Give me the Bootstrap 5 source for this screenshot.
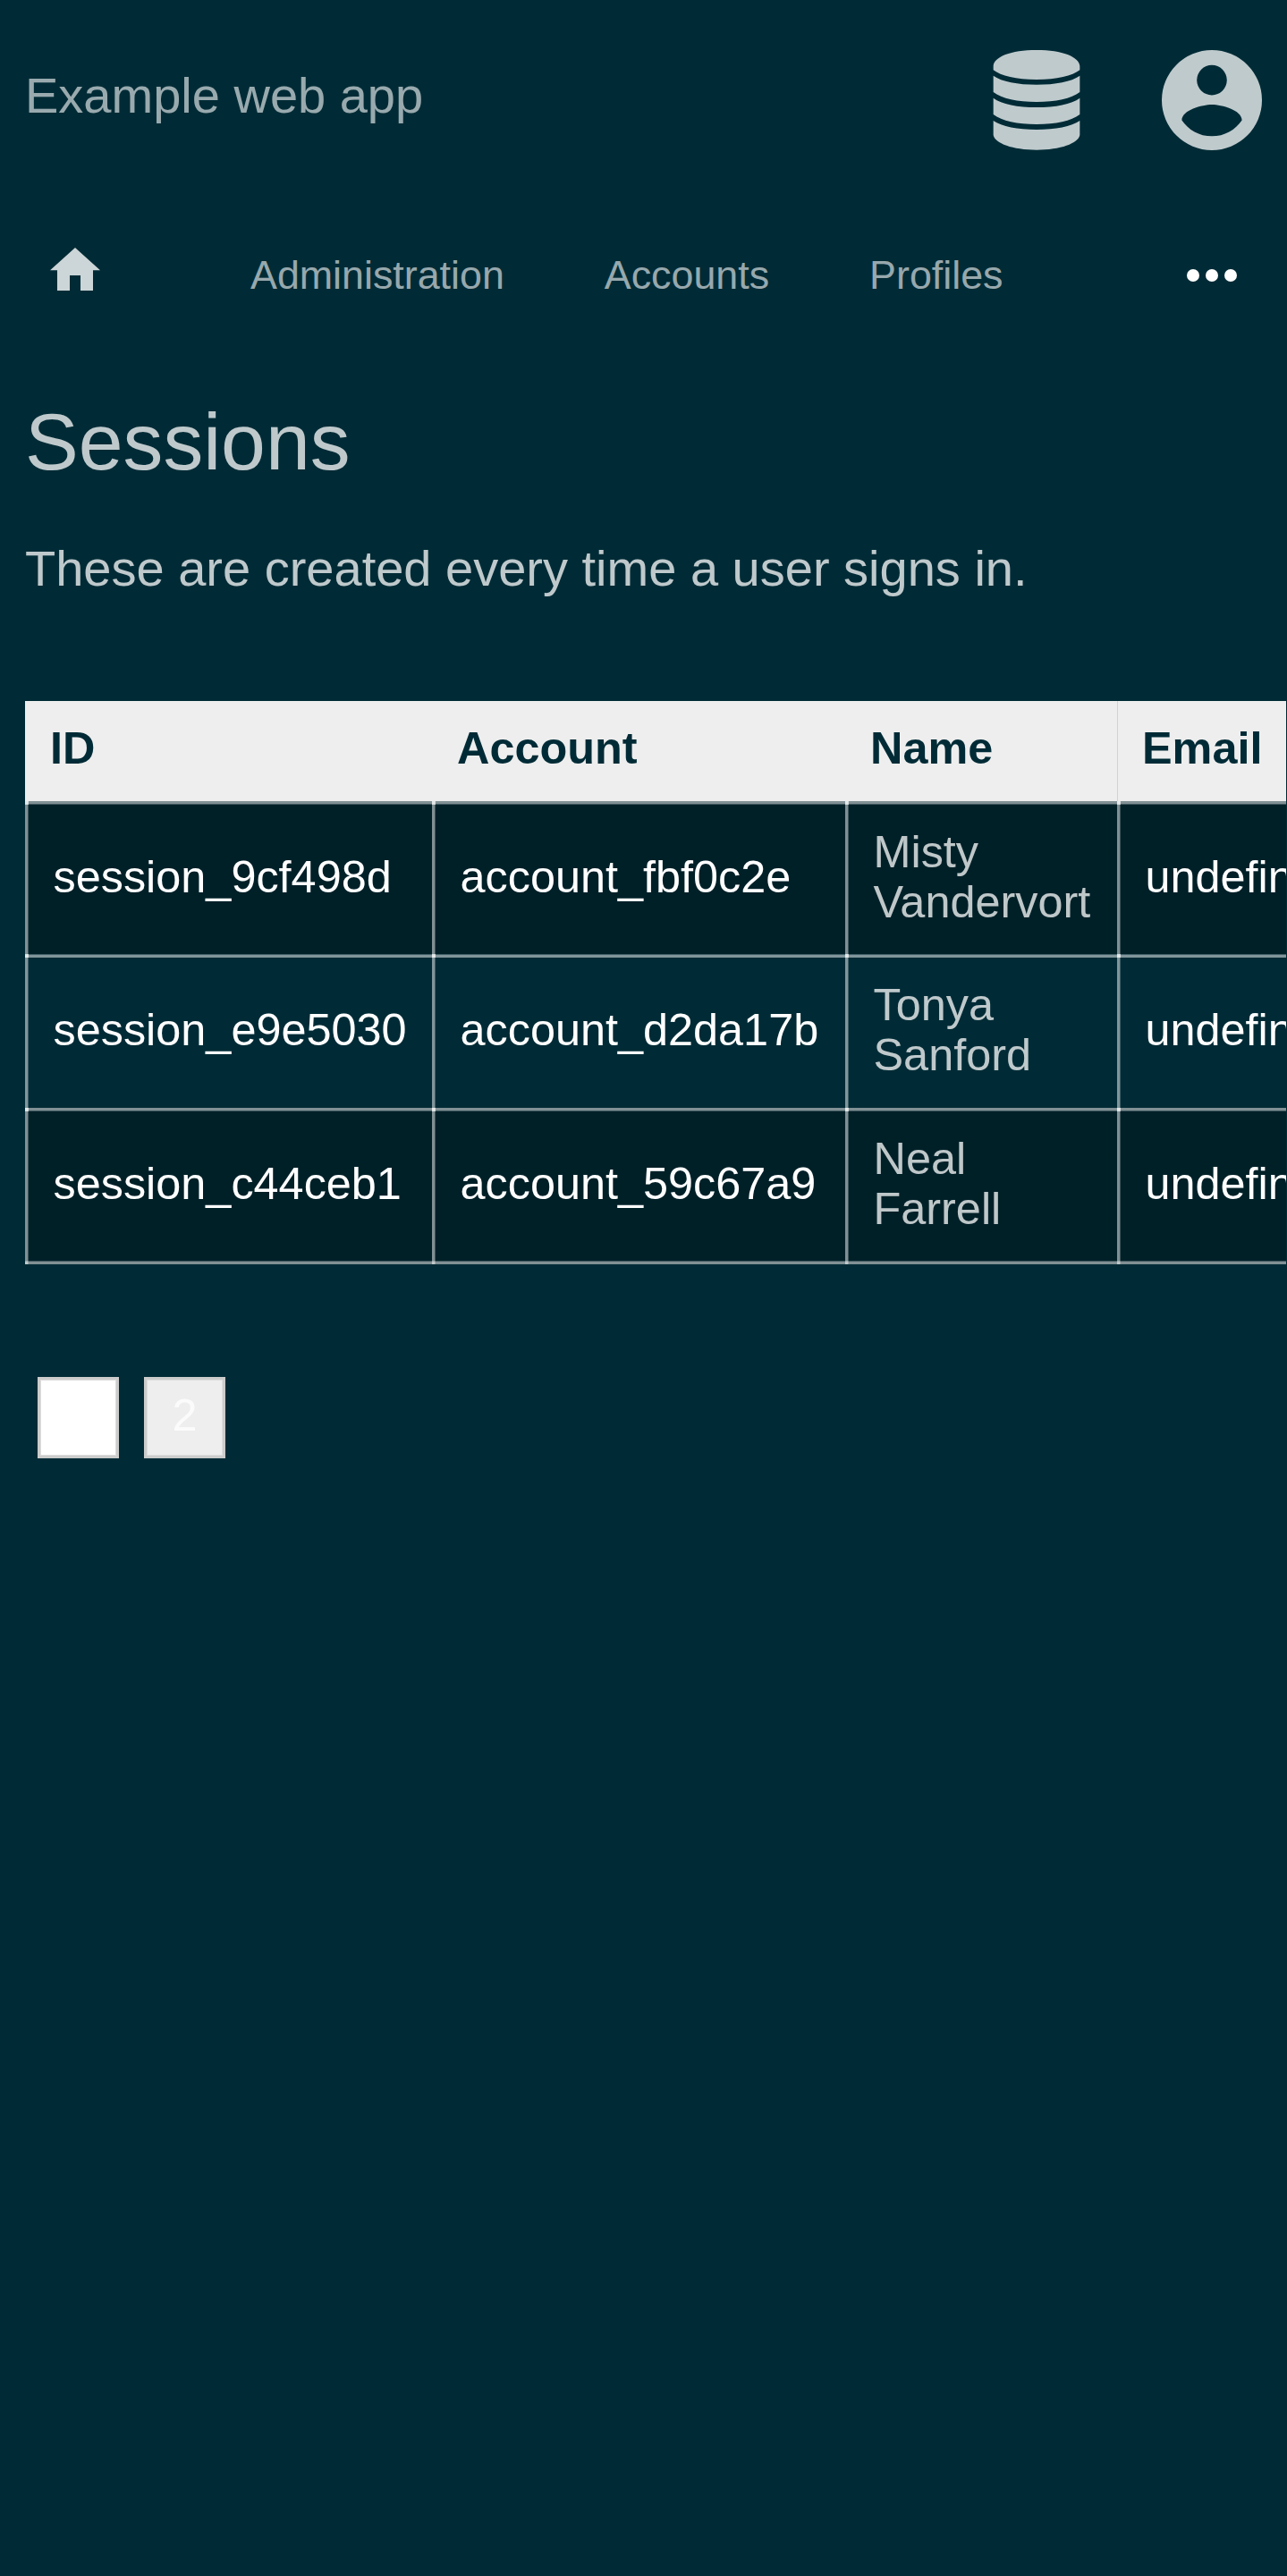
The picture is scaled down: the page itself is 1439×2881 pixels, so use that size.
<!DOCTYPE html>
<html lang="en">
<head>
<meta charset="utf-8">
<meta name="viewport" content="width=device-width, initial-scale=1">
<title>Sessions - Example web app</title>
<link href="https://cdn.jsdelivr.net/npm/bootstrap@5.3.0/dist/css/bootstrap.min.css" rel="stylesheet">
<style>
  body { background: #002b36; color: rgba(255,255,255,.75); font-family: "Liberation Sans", Arial, sans-serif; font-size: 56px; line-height: 1; min-height: 2881px; overflow-x: hidden; }
  a { text-decoration: none; }
  .topbar { height: 224px; padding: 0 28px; }
  .brand-link { color: rgba(255,255,255,.6); padding-bottom: 11px; }
  .topbar-icons { gap: 70px; color: #bfcacd; }
  .tabs { height: 168px; padding: 0 56px; font-size: 44.8px; line-height: 56px; }
  .tabs .tab-link { color: rgba(255,255,255,.6); margin-right: 112px; padding-bottom: 3px; }
  .home-link { width: 56px; margin-right: 168px; }
  main { padding: 46px 0 0 28px; }
  h1 { font-size: 89.6px; font-weight: 400; line-height: 112px; margin: 0; }
  .intro { line-height: 56px; margin: 0; padding: 57.5px 0 120.5px; }
  .table-clip { width: 1410px; overflow: hidden; }
  .data-grid { table-layout: fixed; width: 1589px; font-size: 50.4px; line-height: 56px; border-collapse: separate; border-spacing: 0; }
  .data-grid th { background: #eee; color: #002b36; height: 112px; padding: 0 28px 7px; font-weight: 700; text-align: left; }
  .data-grid th:last-child { border-left: 1px solid #d2d2d2; padding-left: 27px; }
  /* half-transparent cell rules: a 3px stroke with a fainter 1px edge */
  .data-grid td { padding: 0 28px 2px 31.5px; vertical-align: middle; height: 171px; --a: rgba(255,255,255,.5); --b: rgba(255,255,255,.25);
    background-image: linear-gradient(to right, var(--a) 3px, var(--b) 3px 4px, transparent 4px), linear-gradient(var(--r1) 0 1px, var(--a) 1px 3px, var(--r2) 3px 4px, transparent 4px), linear-gradient(rgba(255,255,255,.6), rgba(255,255,255,.6));
    background-size: 4px 100%, 100% 4px, 4px 4px; background-repeat: no-repeat; --r1: var(--a); --r2: var(--b); }
  .data-grid tbody tr:nth-child(2) td { height: 172px; --r1: var(--b); --r2: var(--a); }
  .data-grid tbody tr:nth-child(odd) td { background-color: #002028; }
  .data-grid tbody tr:last-child td { height: 175px; padding-bottom: 6px;
    background-image: linear-gradient(to right, var(--a) 3px, var(--b) 3px 4px, transparent 4px), linear-gradient(var(--a) 3px, var(--b) 3px 4px, transparent 4px), linear-gradient(rgba(255,255,255,.6), rgba(255,255,255,.6)), linear-gradient(var(--b) 1px, var(--a) 1px);
    background-size: 4px 100%, 100% 4px, 4px 4px, 100% 4px; background-position: 0 0, 0 0, 0 0, 0 100%; }
  .data-grid td a { color: #fff; }
  .pager { padding: 126px 14px 0; gap: 28px; font-size: 50.4px; }
  .pager a { width: 91px; height: 91px; border: 3px solid #ccc; box-shadow: inset 0 0 0 1px #ddd; background: #eee; color: #fbfbfb; padding-bottom: 5px; }
  .pager a.current { background: #fff; color: #fff; }
</style>
</head>
<body>
<header>
  <div class="topbar d-flex align-items-center justify-content-between">
    <a class="brand-link" href="#">Example web app</a>
    <div class="topbar-icons d-flex align-items-center">
      <svg width="140" height="112" viewBox="0 0 420 336" fill="currentColor" role="img" aria-label="Database"><path d="M65 67V53C68 23 122 0 210 0s142 23 145 53v14C330 87 278 99 210 99S90 87 65 67ZM65 86c28 20 82 30 145 30s117-10 145-30v55c-28 22-82 33-145 33S93 163 65 141ZM65 161c28 21 82 31 145 31s117-10 145-31v55c-28 22-82 33-145 33S93 238 65 216ZM65 237c28 20 82 30 145 30s117-10 145-30v48c-5 28-65 50-145 50S70 313 65 285Z"/></svg>
      <svg width="112" height="112" viewBox="2 2 20 20" fill="currentColor" role="img" aria-label="Account"><path d="M12 19.2c-2.5 0-4.71-1.28-6-3.2.03-2 4-3.1 6-3.1s5.97 1.1 6 3.1c-1.29 1.92-3.5 3.2-6 3.2M12 5a3 3 0 1 1 0 6 3 3 0 0 1 0-6m0-3a10 10 0 1 0 0 20 10 10 0 0 0 0-20"/></svg>
    </div>
  </div>
  <nav class="tabs d-flex align-items-center">
    <a class="home-link" href="#" aria-label="Home"><svg class="d-block" width="56" height="62" viewBox="0 0 56 62" fill="#ccd5d7"><path d="M28 0 56 25.300H48V48H34V31H22V48H8V25.300H0Z"/></svg></a>
    <a class="tab-link" href="#">Administration</a>
    <a class="tab-link" href="#">Accounts</a>
    <a class="tab-link" href="#">Profiles</a>
    <a class="ms-auto" href="#" aria-label="More"><svg class="d-block" width="56" height="14" viewBox="0 0 56 14" fill="#fff"><circle cx="7" cy="7" r="7"/><circle cx="28" cy="7" r="7"/><circle cx="49" cy="7" r="7"/></svg></a>
  </nav>
</header>
<main>
  <h1>Sessions</h1>
  <p class="intro">These are created every time a user signs in.</p>
  <div class="table-clip">
    <table class="data-grid">
      <colgroup><col style="width:455px"><col style="width:462px"><col style="width:304px"><col style="width:368px"></colgroup>
      <thead><tr><th>ID</th><th>Account</th><th>Name</th><th>Email</th></tr></thead>
      <tbody>
        <tr><td><a href="#">session_9cf498d</a></td><td><a href="#">account_fbf0c2e</a></td><td>Misty Vandervort</td><td><a href="#">undefined</a></td></tr>
        <tr><td><a href="#">session_e9e5030</a></td><td><a href="#">account_d2da17b</a></td><td>Tonya Sanford</td><td><a href="#">undefined</a></td></tr>
        <tr><td><a href="#">session_c44ceb1</a></td><td><a href="#">account_59c67a9</a></td><td>Neal<br>Farrell</td><td><a href="#">undefined</a></td></tr>
      </tbody>
    </table>
  </div>
  <nav class="pager d-flex" aria-label="Pages">
    <a class="current d-flex align-items-center justify-content-center" href="#">1</a>
    <a class="d-flex align-items-center justify-content-center" href="#">2</a>
  </nav>
</main>
<script src="https://cdn.jsdelivr.net/npm/bootstrap@5.3.0/dist/js/bootstrap.bundle.min.js"></script>
</body>
</html>
